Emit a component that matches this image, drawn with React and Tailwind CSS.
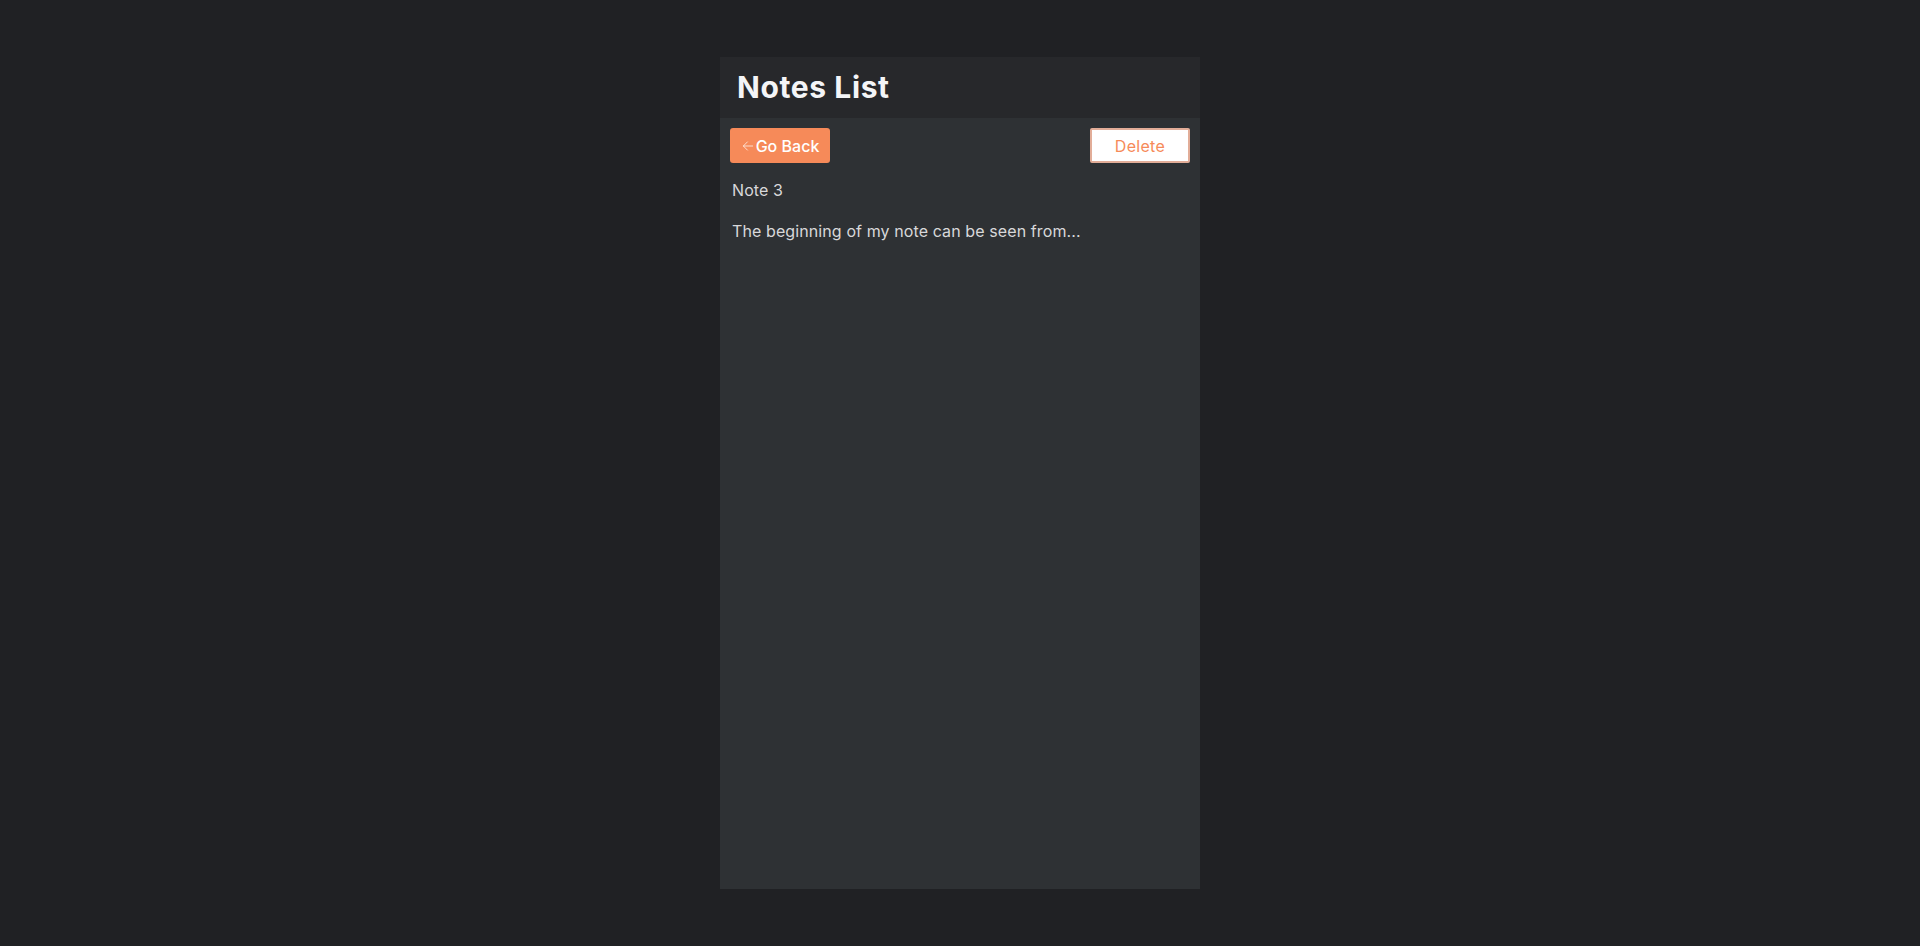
import React from 'react'

export default function App() {
    const note = { title: 'Note 3', body: 'The beginning of my note can be seen from...' };
    return (
        <div className="min-h-screen w-full bg-[#202124] flex justify-center" style={{ fontFamily: 'Inter, "Noto Sans", sans-serif' }}>
            <div className="mt-[57px] w-[480px] h-[832px] flex flex-col bg-[#2e3134]">
                {/* Header */}
                <header className="h-[61px] bg-[#27282b] flex items-center px-[17px]">
                    <h1 className="text-[30px] font-bold text-[#f4f5f7] tracking-[0.6px]">Notes List</h1>
                </header>

                {/* Note body */}
                <main className="p-[10px] flex flex-col">
                    <div className="flex justify-between items-center">
                        <button className="w-[100px] h-[35px] rounded-[3px] bg-[#f68a59] text-white text-[16px] font-medium flex items-center justify-center gap-[1px]">
                            <svg width="14" height="14" viewBox="0 0 24 24" fill="none" stroke="#fde3d5" strokeWidth="1.6" strokeLinecap="round" strokeLinejoin="round">
                                <path d="M20 12H4" />
                                <path d="M11 19l-7-7 7-7" />
                            </svg>
                            Go Back
                        </button>
                        <button className="w-[100px] h-[35px] rounded-[2px] bg-white border-2 border-[#e2ad98] text-[#f68a59] text-[16px] tracking-[0.3px] flex items-center justify-center">
                            Delete
                        </button>
                    </div>
                    <p className="mt-[15px] px-[2px] text-[16px] tracking-[0.1px] text-[#d8d8da]">{note.title}</p>
                    <p className="mt-[17px] px-[2px] text-[16px] tracking-[0.1px] text-[#d8d8da]">{note.body}</p>
                </main>
            </div>
        </div>
    )
}
